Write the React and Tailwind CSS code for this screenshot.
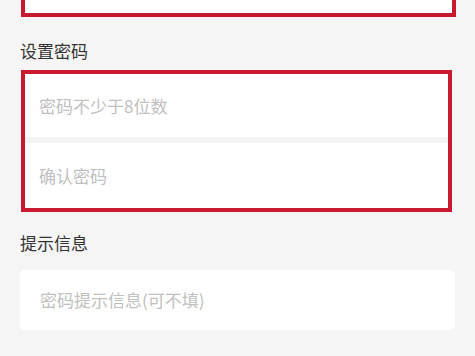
export default function App() {
  const font = { fontFamily: '"Noto Sans CJK SC", "Noto Sans", sans-serif' };
  return (
    <div className="w-[475px] h-[356px] overflow-hidden bg-[#f5f5f5]" style={font}>
      <div className="ml-[21px] w-[435px] h-[17px] bg-white border-x-4 border-b-4 border-[#c8192e]" />
      <div className="ml-[20px] mt-[22px] h-[24px] leading-[24px] text-[17px] text-[#333333]">设置密码</div>
      <div className="ml-[21px] mt-[7px] w-[431px] border-4 border-[#c8192e] bg-[#f4f4f4] flex flex-col gap-[6px]">
        <div className="h-[63px] bg-white flex items-center pl-[14px] text-[17px] text-[#c0c0c0]">密码不少于8位数</div>
        <div className="h-[65px] bg-white flex items-center pl-[14px] text-[17px] text-[#c0c0c0]">确认密码</div>
      </div>
      <div className="ml-[20px] mt-[19px] h-[24px] leading-[24px] text-[17px] text-[#333333]">提示信息</div>
      <div className="ml-[20px] mt-[15px] w-[435px] h-[60px] rounded-[5px] bg-white flex items-center pl-[20px] text-[17px] text-[#c0c0c0]">
        密码提示信息(可不填)
      </div>
    </div>
  );
}
